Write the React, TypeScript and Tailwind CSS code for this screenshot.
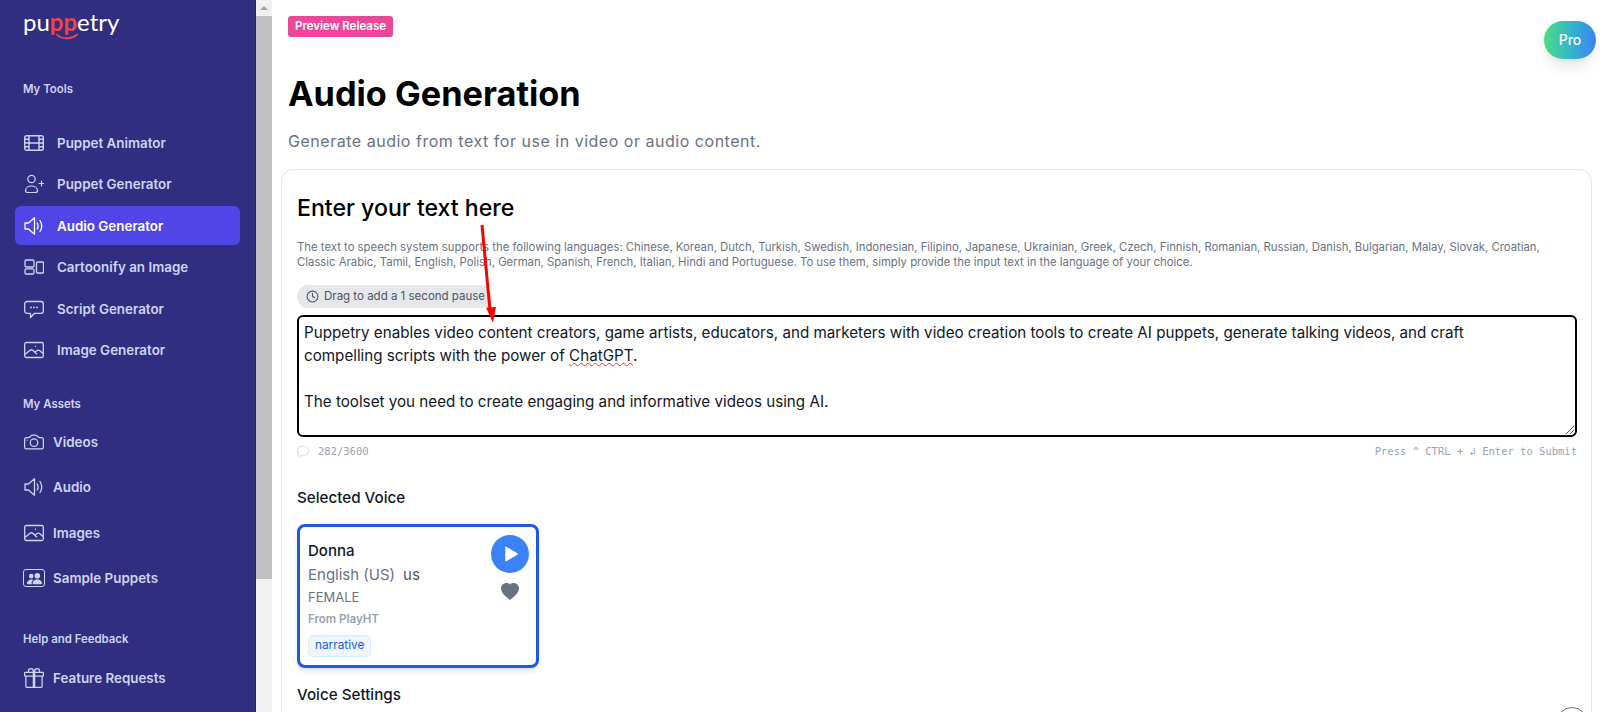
import type { ReactNode } from 'react';
import { BsCamera, BsGift, BsChat, BsPeopleFill, BsHeartFill } from 'react-icons/bs';
import { Clock } from 'lucide-react';

const FilmIcon = () => (
  <svg viewBox="0 0 20 20" className="w-5 h-5" fill="none" stroke="currentColor" strokeWidth="1.4">
    <rect x="0.7" y="2.7" width="18.6" height="14.6" rx="2" />
    <path d="M5 2.7V17.3M15 2.7V17.3M5 10H15M0.7 6.3H5M0.7 10H5M0.7 13.7H5M15 6.3H19.3M15 10H19.3M15 13.7H19.3" />
  </svg>
);

const PersonPlusIcon = () => (
  <svg viewBox="0 0 20 20" className="w-5 h-5" fill="none" stroke="currentColor" strokeWidth="1.2" strokeLinecap="round">
    <circle cx="7.5" cy="5" r="3.7" />
    <path d="M1.5 16.5C1.5 13.5 4.5 12 7.5 12S13.5 13.5 13.5 16.5C13.5 18 12.5 18.5 11.5 18.5H3.5C2.5 18.5 1.5 18 1.5 16.5Z" />
    <path d="M15 9.5H20M17.5 7V12" />
  </svg>
);

const SpeakerIcon = () => (
  <svg viewBox="0 0 20 20" className="w-5 h-5" fill="none" stroke="currentColor" strokeWidth="1.3" strokeLinecap="round" strokeLinejoin="round">
    <path d="M1 7H4.5L10.5 1.8V18.2L4.5 13H1Z" />
    <path d="M13.2 7Q15 10 13.2 13M16 4.5Q19.5 10 16 15.5" />
  </svg>
);

const LayoutIcon = () => (
  <svg viewBox="0 0 20 20" className="w-5 h-5" fill="none" stroke="currentColor" strokeWidth="1.3">
    <rect x="1" y="3" width="9" height="7" rx="1.2" />
    <rect x="1" y="11.8" width="9" height="5.2" rx="1.2" />
    <rect x="12.5" y="5" width="7" height="11" rx="1.2" />
  </svg>
);

const ChatIcon = () => (
  <svg viewBox="0 0 20 20" className="w-5 h-5" fill="none" stroke="currentColor" strokeWidth="1.3" strokeLinejoin="round">
    <path d="M3 2.5H17A2.3 2.3 0 0 1 19.3 4.8V12A2.3 2.3 0 0 1 17 14.3H10.5L6.5 18.5V14.3H3A2.3 2.3 0 0 1 0.7 12V4.8A2.3 2.3 0 0 1 3 2.5Z" />
    <path d="M7 8.4H7.01M10 8.4H10.01M13 8.4H13.01" strokeWidth="1.8" strokeLinecap="round" />
  </svg>
);

const ImageIcon = () => (
  <svg viewBox="0 0 20 20" className="w-5 h-5" fill="none" stroke="currentColor" strokeWidth="1.3" strokeLinejoin="round">
    <rect x="0.7" y="2.5" width="18.6" height="15" rx="1.5" />
    <path d="M1 14.5L6 10.2Q7.5 9.2 9 10.5L13 14.3M11 12L13.5 10.3Q14.5 9.8 15.5 10.5L19 13.5" />
    <circle cx="11.5" cy="6.3" r="0.7" fill="currentColor" stroke="none" />
  </svg>
);

const PuppetsIcon = () => (
  <span className="relative flex w-[23px] h-[18px] items-center justify-center rounded-[3px] border-[1.5px] border-current -ml-[1px] mr-[-1px]">
    <BsPeopleFill className="w-[15px] h-[15px]" />
  </span>
);

const Logo = () => (
  <div className="relative ml-[23px] h-[24px] w-[98px] font-['Lato',sans-serif] text-[24px] leading-[24px] font-normal text-white">
    pu<span className="text-[#ef4444] font-bold">pp</span>etry
    <svg viewBox="0 0 26 8" className="absolute left-[31px] top-[23px] w-[26px] h-[8px]" fill="none" stroke="#ef4444" strokeWidth="1.8" strokeLinecap="round">
      <path d="M3 1.5C7 6.5 18 6.5 23 1.5" />
    </svg>
  </div>
);

type NavProps = { icon: ReactNode; label: string; active?: boolean; tall?: boolean };

const NavItem = ({ icon, label, active, tall }: NavProps) => (
  <div
    className={
      'flex items-center rounded-md text-[13.4px] font-semibold ' +
      (tall ? 'h-[45.5px] pl-[9px] gap-[9px] ' : 'pl-[9px] gap-[13px] ') +
      (!tall && active ? 'h-[39px] my-[1.25px] ' : '') +
      (!tall && !active ? 'h-[41.5px] ' : '') +
      (active ? 'bg-[#4f46e5] text-white' : 'text-[#cdd3f4]')
    }
  >
    <span className="flex w-5 h-5 shrink-0 items-center justify-center text-[20px]">{icon}</span>
    <span>{label}</span>
  </div>
);

const Heading = ({ children, className }: { children: ReactNode; className: string }) => (
  <div className={'pl-[8px] text-[11.4px] font-semibold text-[#cdd3f4] ' + className}>{children}</div>
);

const Sidebar = () => (
  <aside className="w-[256px] shrink-0 h-full bg-[#312e81] border-r border-[#1e1b9b] pt-[10px] overflow-hidden">
    <Logo />
    <div className="px-[15px]">
      <Heading className="mt-[47px] mb-[24px]">My Tools</Heading>
      <NavItem icon={<FilmIcon />} label="Puppet Animator" />
      <NavItem icon={<PersonPlusIcon />} label="Puppet Generator" />
      <NavItem icon={<SpeakerIcon />} label="Audio Generator" active />
      <NavItem icon={<LayoutIcon />} label="Cartoonify an Image" />
      <NavItem icon={<ChatIcon />} label="Script Generator" />
      <NavItem icon={<ImageIcon />} label="Image Generator" />
      <Heading className="mt-[25px] mb-[6px]">My Assets</Heading>
      <NavItem tall icon={<BsCamera />} label="Videos" />
      <NavItem tall icon={<SpeakerIcon />} label="Audio" />
      <NavItem tall icon={<ImageIcon />} label="Images" />
      <NavItem tall icon={<PuppetsIcon />} label="Sample Puppets" />
      <Heading className="mt-[30px] mb-[7px]">Help and Feedback</Heading>
      <NavItem tall icon={<BsGift />} label="Feature Requests" />
    </div>
  </aside>
);

const Scrollbar = () => (
  <div className="w-[16px] shrink-0 h-full bg-[#f1f1f1] flex flex-col">
    <div className="h-[16px] flex items-center justify-center">
      <div className="w-0 h-0 border-x-[4px] border-x-transparent border-b-[4px] border-b-[#a3a3a3]" />
    </div>
    <div className="h-[563px] bg-[#c1c1c1]" />
  </div>
);

const VoiceCard = () => (
  <div className="w-[242px] h-[144px] mt-[16px] rounded-lg border-[3px] border-[#1d5ae0] bg-white shadow-md pl-[8px] pr-[7px] pt-[8px] flex justify-between">
    <div>
      <div className="text-[15px] font-medium leading-[20px] mt-[6px] text-gray-900">Donna</div>
      <div className="flex items-baseline mt-[4px] text-[15px] leading-[20px] text-gray-500">
        English (US)
        <span className="ml-[8px] text-gray-600">us</span>
      </div>
      <div className="text-[13px] leading-[16px] mt-[4px] text-gray-500">FEMALE</div>
      <div className="text-[11.5px] leading-[16px] mt-[6px] font-semibold text-gray-400">From PlayHT</div>
      <div className="mt-[8px] inline-flex h-[22px] items-center rounded-[5px] border border-blue-100 bg-blue-50 px-[6px] text-[11.8px] text-blue-600">
        narrative
      </div>
    </div>
    <div className="flex flex-col items-center">
      <div className="w-[38px] h-[38px] rounded-full bg-[#3b82f6] flex items-center justify-center">
        <svg viewBox="0 0 20 20" className="w-[20px] h-[20px] ml-[2px]" fill="white" stroke="white" strokeWidth="1.5" strokeLinejoin="round">
          <path d="M5 3.5v13l11-6.5z" />
        </svg>
      </div>
      <BsHeartFill className="w-[18px] h-[18px] mt-[10px] text-gray-500" />
    </div>
  </div>
);

const Card = () => (
  <section className="ml-[9px] w-[1311px] mt-[16px] rounded-xl border border-gray-200 bg-white pl-[15px] pr-[14px] pt-[24px] h-[600px]">
    <h2 className="text-[23.1px] font-medium leading-[28px] text-black">Enter your text here</h2>
    <p className="mt-[18px] text-[11.33px] leading-[15px] text-gray-500">
      The text to speech system supports the following languages: Chinese, Korean, Dutch, Turkish, Swedish, Indonesian, Filipino, Japanese, Ukrainian, Greek, Czech, Finnish, Romanian, Russian, Danish, Bulgarian, Malay, Slovak, Croatian,
      <br />
      Classic Arabic, Tamil, English, Polish, German, Spanish, French, Italian, Hindi and Portuguese. To use them, simply provide the input text in the language of your choice.
    </p>
    <div className="mt-[15px] w-[195px] h-[23px] rounded-full bg-gray-200 flex items-center gap-[5px] pl-[9px] text-[11.5px] text-gray-600">
      <Clock className="w-[13px] h-[13px] text-gray-600" />
      Drag to add a 1 second pause
    </div>
    <div className="relative mt-[7px] h-[122px] rounded-[6px] border-2 border-black px-[5px] pt-[4px] text-[15.2px] leading-[23px] text-gray-900">
      Puppetry enables video content creators, game artists, educators, and marketers with video creation tools to create AI puppets, generate talking videos, and craft
      <br />
      compelling scripts with the power of <span className="underline decoration-wavy decoration-red-500 decoration-1">ChatGPT</span>.
      <br />
      <br />
      The toolset you need to create engaging and informative videos using AI.
      <svg viewBox="0 0 10 10" className="absolute right-0 bottom-0 w-[10px] h-[10px]" stroke="#555" strokeWidth="1">
        <path d="M1 9L9 1M5 9L9 5" />
      </svg>
    </div>
    <div className="mt-[7px] flex items-center justify-between font-['DejaVu_Sans_Mono',monospace] text-[10.5px] leading-[14px] text-gray-400">
      <div className="flex items-center gap-[9px]">
        <BsChat className="w-[12px] h-[12px] text-gray-300" />
        282/3600
      </div>
      <div>Press ^ CTRL + ↲ Enter to Submit</div>
    </div>
    <div className="mt-[30px] text-[15.2px] font-medium leading-[20px] text-gray-900">Selected Voice</div>
    <VoiceCard />
    <div className="mt-[17px] text-[15.2px] font-medium leading-[20px] text-gray-900">Voice Settings</div>
  </section>
);

const ArrowOverlay = () => (
  <svg className="absolute left-0 top-0 w-full h-full pointer-events-none" viewBox="0 0 1600 712">
    <line x1="482" y1="225" x2="490" y2="310" stroke="#f00" strokeWidth="3" />
    <path d="M486 307.5L496 307L493 323Z" fill="#f00" />
  </svg>
);

export default function App() {
  return (
    <div className="relative flex w-[1600px] h-[712px] overflow-hidden bg-white font-['Inter',sans-serif]">
      <Sidebar />
      <Scrollbar />
      <main className="relative flex-1 h-full overflow-hidden pt-[16px]">
        <div className="ml-[16px] flex h-[21px] w-[105px] items-center justify-center rounded-[3px] bg-[#ec4899] text-[11.5px] font-semibold text-white">
          Preview Release
        </div>
        <h1 className="ml-[16px] mt-[37px] text-[34.3px] font-bold leading-[40px] text-black">Audio Generation</h1>
        <p className="ml-[16px] mt-[15px] text-base tracking-[0.52px] leading-[24px] text-gray-500">
          Generate audio from text for use in video or audio content.
        </p>
        <Card />
        <div className="absolute left-[1272px] top-[21px] w-[52px] h-[38px] rounded-full bg-gradient-to-r from-[#4ade80] to-[#3b82f6] shadow-lg flex items-center justify-center text-sm font-medium text-white">
          Pro
        </div>
        <div className="absolute left-[1284px] top-[707px] w-[32px] h-[32px] rounded-full border border-gray-500 bg-white" />
      </main>
      <ArrowOverlay />
    </div>
  );
}
